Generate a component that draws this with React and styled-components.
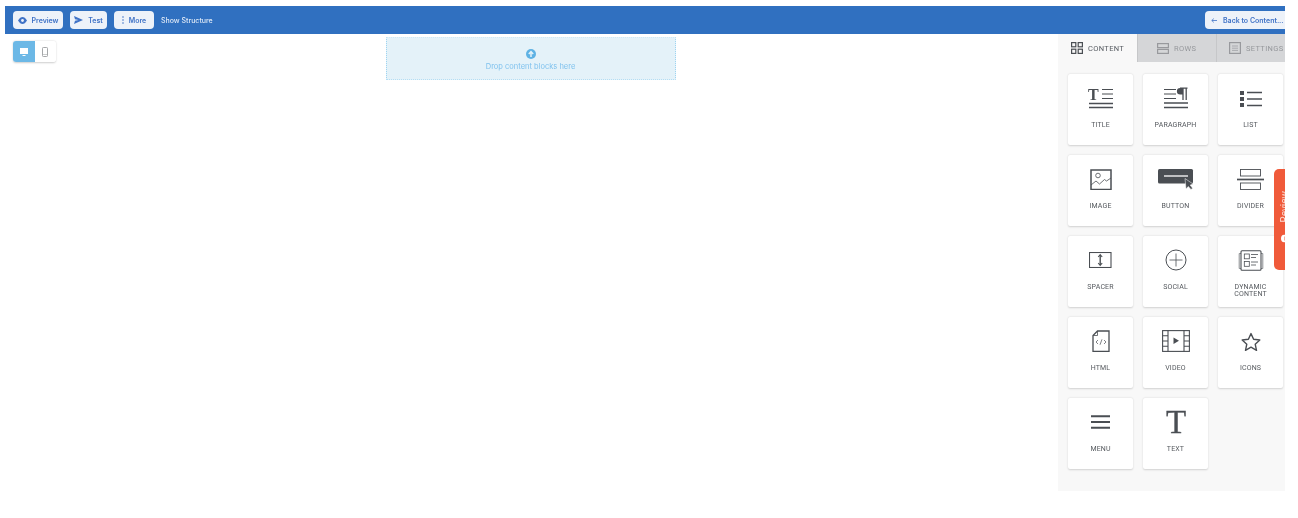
import React from "react";
import styled, { createGlobalStyle } from "styled-components";

const Global = createGlobalStyle`
  html, body { margin: 0; padding: 0; background: #fff; }
  body { font-family: Inter, "Liberation Sans", sans-serif; }
`;

const Frame = styled.div`
  position: relative;
  width: 1280px;
  height: 485px;
  margin: 6px 0 0 5px;
  overflow: hidden;
  background: #fff;
  display: flex;
  flex-direction: column;
  filter: blur(0.4px);
`;

const Toolbar = styled.header`
  height: 28px;
  flex: none;
  background: #3070c0;
  display: flex;
  align-items: center;
  justify-content: space-between;
  padding-left: 8px;
  box-sizing: border-box;
`;

const Group = styled.div`
  display: flex;
  align-items: center;
  gap: 7px;
`;

const ToolButton = styled.button`
  height: 18px;
  width: ${p => p.$w}px;
  border: 0;
  border-radius: 4px;
  background: #edf2f9;
  color: #3f72c6;
  display: flex;
  align-items: center;
  justify-content: center;
  gap: ${p => p.$gap || 5}px;
  padding: 0;
  font: 600 7px Inter, "Liberation Sans", sans-serif;
`;

const BackButton = styled(ToolButton)`
  border-radius: 4px 0 0 4px;
  justify-content: flex-start;
  padding-left: 6px;
  box-sizing: border-box;
`;

const StructureLabel = styled.span`
  font-size: 7px;
  font-weight: 500;
  color: #dfe9f6;
`;

const Body = styled.div`
  flex: 1;
  display: flex;
  min-height: 0;
`;

const Canvas = styled.main`
  position: relative;
  flex: 1;
  padding: 3px 2px 0 0;
`;

const DeviceToggle = styled.div`
  position: absolute;
  left: 8px;
  top: 7px;
  display: flex;
  width: 43px;
  height: 21px;
  border-radius: 3px;
  overflow: hidden;
  background: #fff;
  box-shadow: 0 0.5px 2px rgba(0, 0, 0, 0.2);
`;

const DeviceButton = styled.div`
  flex: 1;
  display: flex;
  align-items: center;
  justify-content: center;
  background: ${p => (p.$active ? "#6cb8e6" : "#fff")};
`;

const DropZone = styled.div`
  width: 290px;
  height: 43px;
  margin: 0 auto;
  box-sizing: border-box;
  background: #e4f2f9;
  border-left: 1px dotted #9ed4f1;
  border-right: 1px dotted #9ed4f1;
  border-top: 1px dotted #cfe9f7;
  border-bottom: 1px dotted #b4def4;
  display: flex;
  flex-direction: column;
  align-items: center;
  padding-top: 11px;
  gap: 3px;
  color: #7fc2ee;
  font-size: 7.5px;
`;

const Sidebar = styled.aside`
  width: 227px;
  flex: none;
  background: #f8f8f8;
  display: flex;
  flex-direction: column;
`;

const Tabs = styled.nav`
  display: grid;
  grid-template-columns: 79px 79px 79px;
  height: 28px;
  flex: none;
`;

const Tab = styled.div`
  display: flex;
  align-items: center;
  gap: 5px;
  padding-left: ${p => p.$pad}px;
  background: ${p => (p.$active ? "#f8f8f8" : "#d5d6d8")};
  border-left: ${p => (p.$active ? "0" : "1px solid #c6c7c9")};
  color: ${p => (p.$active ? "#555a60" : "#96989c")};
  font: 400 7.5px Roboto, sans-serif;
  letter-spacing: 0.35px;
  white-space: nowrap;
`;

const Grid = styled.div`
  display: grid;
  grid-template-columns: repeat(3, 65px);
  grid-auto-rows: 71px;
  gap: 10px;
  padding: 12px 0 0 10px;
`;

const Card = styled.div`
  background: #fff;
  border-radius: 2px;
  box-shadow: 0 0.5px 2px rgba(0, 0, 0, 0.16);
  display: flex;
  flex-direction: column;
  align-items: center;
  color: #4e5258;
`;

const IconSlot = styled.div`
  height: 47.5px;
  padding-top: 1px;
  box-sizing: border-box;
  width: 100%;
  flex: none;
  display: flex;
  align-items: center;
  justify-content: center;
`;

const CardLabel = styled.span`
  max-width: 50px;
  font: 400 7px/7.5px Roboto, sans-serif;
  letter-spacing: 0.15px;
  text-align: center;
  color: #55595e;
`;

const ReviewTab = styled.div`
  position: absolute;
  right: -1px;
  top: 163px;
  width: 12px;
  height: 101px;
  background: #f05a3a;
  border-radius: 5px 0 0 5px;
  overflow: hidden;
`;

const ReviewText = styled.div`
  position: absolute;
  left: 5px;
  bottom: 28px;
  display: flex;
  align-items: center;
  gap: 12px;
  writing-mode: vertical-rl;
  transform: rotate(180deg);
  color: #fbd9d0;
  font: 400 10px/12px Roboto, sans-serif;
  white-space: nowrap;
`;

const Svg = ({ w, h, children, ...rest }) => (
  <svg width={w} height={h} viewBox={`0 0 ${w} ${h}`} fill="none" stroke="#4a4e53" {...rest}>
    {children}
  </svg>
);

const TitleIcon = () => (
  <Svg w={26} h={22}>
    <text x="0" y="13" fontFamily="Liberation Serif" fontSize="16" fontWeight="700" fill="#4a4e53" stroke="none">T</text>
    <path d="M14 2.5h11M14 7h11M14 11.5h11" strokeWidth="1.1" />
    <path d="M1 16.5h24M1 20.5h24" strokeWidth="1.6" />
  </Svg>
);
const ParagraphIcon = () => (
  <Svg w={25} h={22}>
    <path d="M1 2.5h12M1 7h12M1 11.5h12" strokeWidth="1.1" />
    <path d="M1 16h24M1 20.5h24" strokeWidth="1.6" />
    <path d="M20 13V1.2M23.2 13V1.2M24.5 1.2H17" strokeWidth="1.3" />
    <path d="M20 1h-2.8a3.3 3.3 0 0 0 0 6.6H20z" fill="#4a4e53" stroke="none" />
  </Svg>
);
const ListIcon = () => (
  <Svg w={22} h={17}>
    <g fill="#4a4e53" stroke="none">
      <rect x="0" y="1" width="4" height="4" />
      <rect x="0" y="7" width="4" height="4" />
      <rect x="0" y="13" width="4" height="4" />
    </g>
    <path d="M7 2.5h15M7 9h15M7 15.5h15" strokeWidth="1.6" />
  </Svg>
);
const ImageIcon = () => (
  <Svg w={22} h={21}>
    <rect x="1" y="1" width="20" height="19.5" strokeWidth="1.5" />
    <circle cx="8" cy="6.5" r="2.3" strokeWidth="0.8" />
    <path d="M1 16l5-4 3.5 3 5-4.5 2 1.5 4.5-3" strokeWidth="0.8" />
  </Svg>
);
const ButtonIcon = () => (
  <Svg w={36} h={21}>
    <rect x="0" y="0" width="35" height="14.5" rx="1.5" fill="#4a4e53" stroke="none" />
    <path d="M6 7h24" stroke="#fff" strokeWidth="1.3" />
    <path d="M27 9.5l1 10.5 2.3-2.6 2.7 3 1.6-1.1-2.4-3.2 3-1z" fill="#4a4e53" stroke="#fff" strokeWidth="0.5" />
  </Svg>
);
const DividerIcon = () => (
  <Svg w={27} h={21}>
    <rect x="3.5" y="0.5" width="20" height="6.5" strokeWidth="0.9" />
    <path d="M0 10.5h27" strokeWidth="1.7" />
    <rect x="3.5" y="14" width="20" height="6.5" strokeWidth="0.9" />
  </Svg>
);
const SpacerIcon = () => (
  <Svg w={23} h={16}>
    <rect x="0.5" y="0.5" width="21.5" height="15" strokeWidth="1.1" />
    <path d="M11.2 3v10" strokeWidth="1.4" />
    <path d="M9.2 5l2-2.4 2 2.4M9.2 11l2 2.4 2-2.4" strokeWidth="1.1" />
  </Svg>
);
const SocialIcon = () => (
  <Svg w={22} h={22}>
    <circle cx="11" cy="11" r="10" strokeWidth="1" />
    <path d="M11 4.5v13M4.5 11h13" strokeWidth="0.8" />
  </Svg>
);
const DynamicIcon = () => (
  <Svg w={26} h={21}>
    <path d="M3 3.5H1.2v15H3M23 3.5h1.8v15H23" strokeWidth="1" stroke="#8b8e92" />
    <rect x="3" y="0.7" width="20" height="19.6" rx="1" strokeWidth="1.1" />
    <rect x="6.3" y="4" width="5" height="4.8" strokeWidth="0.8" />
    <rect x="6.3" y="11.5" width="5" height="4.8" strokeWidth="0.8" />
    <path d="M13 4.5h7M13 7.5h5M13 12h7M13 15h5" strokeWidth="0.8" />
  </Svg>
);
const HtmlIcon = () => (
  <Svg w={18} h={22}>
    <path d="M5.5 1H17v20.5H1V5.5z" strokeWidth="1.3" />
    <path d="M1 5.5h4.5V1" strokeWidth="0.8" />
    <path d="M6 10l-2 2 2 2M12 10l2 2-2 2M10 9.3L8 14.8" strokeWidth="0.7" />
  </Svg>
);
const VideoIcon = () => (
  <Svg w={28} h={22}>
    <rect x="0.6" y="0.6" width="26.8" height="20.8" strokeWidth="1.1" />
    <path d="M6 .6v20.8M22 .6v20.8M.6 5.8H6M.6 11H6M.6 16.2H6M22 5.8h5.4M22 11h5.4M22 16.2h5.4" strokeWidth="1.1" />
    <path d="M11.5 7.5v6.5l5.5-3.2z" fill="#4a4e53" stroke="none" />
  </Svg>
);
const StarIcon = () => (
  <Svg w={20} h={19}>
    <path d="M10 1.6l2.6 5.7 6.2.7-4.6 4.2 1.3 6.1-5.5-3.1-5.5 3.1 1.3-6.1L1.2 8l6.2-.7z" strokeWidth="1.4" strokeLinejoin="round" />
  </Svg>
);
const MenuIcon = () => (
  <Svg w={19} h={14}>
    <path d="M0 1.2h19M0 7h19M0 12.8h19" strokeWidth="2" />
  </Svg>
);
const BigT = () => (
  <svg width="24" height="38" viewBox="0 0 24 38">
    <text x="12" y="30" textAnchor="middle" fontFamily="Liberation Serif" fontSize="33" fill="#4a4e53" stroke="#4a4e53" strokeWidth="0.3">T</text>
  </svg>
);

const items = [
  ["TITLE", TitleIcon], ["PARAGRAPH", ParagraphIcon], ["LIST", ListIcon],
  ["IMAGE", ImageIcon], ["BUTTON", ButtonIcon], ["DIVIDER", DividerIcon],
  ["SPACER", SpacerIcon], ["SOCIAL", SocialIcon], ["DYNAMIC CONTENT", DynamicIcon],
  ["HTML", HtmlIcon], ["VIDEO", VideoIcon], ["ICONS", StarIcon],
  ["MENU", MenuIcon], ["TEXT", BigT],
];

export default function App() {
  return (
    <>
      <Global />
      <Frame>
        <Toolbar>
          <Group>
            <ToolButton $w={50}>
              <svg width="9" height="7" viewBox="0 0 9 7"><path d="M0 3.5C1.5 1 3 0 4.5 0S7.5 1 9 3.5C7.5 6 6 7 4.5 7S1.5 6 0 3.5z" fill="#3f72c6" /><circle cx="4.5" cy="3.5" r="1.4" fill="#edf2f9" /></svg>
              Preview
            </ToolButton>
            <ToolButton $w={37}>
              <svg width="9" height="8" viewBox="0 0 9 8"><path d="M0 0l9 4-9 4 1-3.2 3.5-.8L1 3.2z" fill="#3f72c6" /></svg>
              Test
            </ToolButton>
            <ToolButton $w={40}>
              <svg width="2" height="8" viewBox="0 0 2 8" fill="#3f72c6"><circle cx="1" cy="1" r="0.8" /><circle cx="1" cy="4" r="0.8" /><circle cx="1" cy="7" r="0.8" /></svg>
              More
            </ToolButton>
            <StructureLabel>Show Structure</StructureLabel>
          </Group>
          <BackButton $w={80} $gap={6}>
            <svg width="6" height="5" viewBox="0 0 6 5" fill="none" stroke="#3f72c6" strokeWidth="0.8"><path d="M6 2.5H.8M2.8.6L.8 2.5l2 1.9" /></svg>
            Back to Content...
          </BackButton>
        </Toolbar>
        <Body>
          <Canvas>
            <DeviceToggle>
              <DeviceButton $active>
                <svg width="8" height="8" viewBox="0 0 8 8"><rect x="0.5" y="0.5" width="7" height="5" fill="#fff" stroke="#fff" /><path d="M2.5 7.5h3" stroke="#fff" /></svg>
              </DeviceButton>
              <DeviceButton>
                <svg width="6" height="10" viewBox="0 0 6 10" fill="none"><rect x="0.5" y="0.5" width="5" height="9" rx="0.8" stroke="#a5a7a9" /><path d="M.5 7.5h5" stroke="#a5a7a9" strokeWidth="0.6" /></svg>
              </DeviceButton>
            </DeviceToggle>
            <DropZone>
              <svg width="10" height="10" viewBox="0 0 10 10"><circle cx="5" cy="5" r="5" fill="#5eb2e4" /><path d="M5 8V3M2.8 5L5 2.6 7.2 5" stroke="#e4f2f9" strokeWidth="1.5" fill="none" /></svg>
              Drop content blocks here
            </DropZone>
          </Canvas>
          <Sidebar>
            <Tabs>
              <Tab $active $pad={13}>
                <svg width="12" height="12" viewBox="0 0 12 12" fill="none" stroke="#4a4e53" strokeWidth="1.2"><rect x="0.6" y="0.6" width="4.2" height="4.2" /><rect x="7.2" y="0.6" width="4.2" height="4.2" /><rect x="0.6" y="7.2" width="4.2" height="4.2" /><rect x="7.2" y="7.2" width="4.2" height="4.2" /></svg>
                CONTENT
              </Tab>
              <Tab $pad={19}>
                <svg width="12" height="11" viewBox="0 0 12 11" fill="none" stroke="#98999d" strokeWidth="1.2"><rect x="0.6" y="0.6" width="10.8" height="4" /><rect x="0.6" y="6.4" width="10.8" height="4" /></svg>
                ROWS
              </Tab>
              <Tab $pad={12}>
                <svg width="12" height="12" viewBox="0 0 12 12" fill="none" stroke="#98999d" strokeWidth="1.2"><rect x="0.6" y="0.6" width="10.8" height="10.8" /><path d="M3 4h6M3 6.2h6M3 8.4h6" strokeWidth="0.7" /></svg>
                SETTINGS
              </Tab>
            </Tabs>
            <Grid>
              {items.map(([label, Icon]) => (
                <Card key={label}>
                  <IconSlot><Icon /></IconSlot>
                  <CardLabel>{label}</CardLabel>
                </Card>
              ))}
            </Grid>
          </Sidebar>
        </Body>
        <ReviewTab>
          <ReviewText>
            <svg width="8" height="8" viewBox="0 0 8 8"><circle cx="4" cy="4" r="4" fill="#fff" /><path d="M4 2v4" stroke="#f05a3a" /></svg>
            <span>Review</span>
          </ReviewText>
        </ReviewTab>
      </Frame>
    </>
  );
}
